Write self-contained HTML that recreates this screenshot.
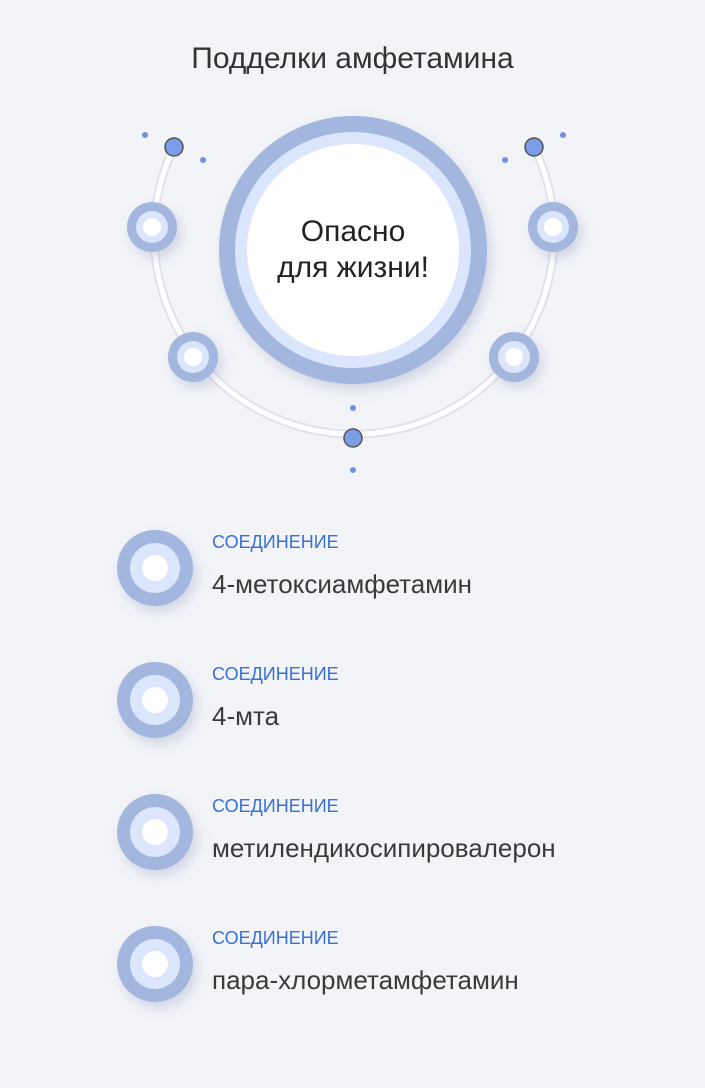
<!DOCTYPE html>
<html><head><meta charset="utf-8"><style>
body{margin:0;background:#f2f4f8;width:705px;height:1088px;overflow:hidden;font-family:"Liberation Sans","DejaVu Sans",sans-serif;position:relative}
.t{position:absolute;left:0;width:705px;text-align:center;top:42px;font-size:30px;color:#333}
.lab{position:absolute;left:212px;font-size:18px;color:#3a6fd8}
.nm{position:absolute;left:212px;font-size:26px;color:#3a3a3a}
</style></head><body>
<svg width="705" height="1088" style="position:absolute;left:0;top:0">
<defs><filter id="sh" x="-50%" y="-50%" width="200%" height="200%"><feDropShadow dx="4" dy="6" stdDeviation="6" flood-color="#8090b0" flood-opacity="0.3"/></filter></defs>
<path d="M174,147 A200,200 0 1,0 534,147" fill="none" stroke="#e0e3ea" stroke-width="9"/>
<path d="M174,147 A200,200 0 1,0 534,147" fill="none" stroke="#fff" stroke-width="5"/>
<g filter="url(#sh)"><circle cx="353" cy="250" r="134" fill="#a3b6de"/></g>
<circle cx="353" cy="250" r="118" fill="#dbe6fc"/>
<circle cx="353" cy="250" r="106" fill="#fff"/>
<g fill="#6f93e0"><circle cx="145" cy="135" r="3"/><circle cx="203" cy="160" r="3"/><circle cx="505" cy="160" r="3"/><circle cx="563" cy="135" r="3"/><circle cx="353" cy="408" r="3"/><circle cx="353" cy="470" r="3"/></g>
<g fill="#7b9de8" stroke="#555" stroke-width="1.5"><circle cx="174" cy="147" r="9"/><circle cx="534" cy="147" r="9"/><circle cx="353" cy="438" r="9"/></g>
<g>
<g filter="url(#sh)"><circle cx="152" cy="227" r="25" fill="#a3b6de"/><circle cx="193" cy="357" r="25" fill="#a3b6de"/><circle cx="514" cy="357" r="25" fill="#a3b6de"/><circle cx="553" cy="227" r="25" fill="#a3b6de"/></g>
<g fill="#dbe6fc"><circle cx="152" cy="227" r="16"/><circle cx="193" cy="357" r="16"/><circle cx="514" cy="357" r="16"/><circle cx="553" cy="227" r="16"/></g>
<g fill="#fff"><circle cx="152" cy="227" r="9"/><circle cx="193" cy="357" r="9"/><circle cx="514" cy="357" r="9"/><circle cx="553" cy="227" r="9"/></g>
</g>
<g filter="url(#sh)"><circle cx="155" cy="568" r="38" fill="#a3b6de"/><circle cx="155" cy="700" r="38" fill="#a3b6de"/><circle cx="155" cy="832" r="38" fill="#a3b6de"/><circle cx="155" cy="964" r="38" fill="#a3b6de"/></g>
<g fill="#dbe6fc"><circle cx="155" cy="568" r="25"/><circle cx="155" cy="700" r="25"/><circle cx="155" cy="832" r="25"/><circle cx="155" cy="964" r="25"/></g>
<g fill="#fff"><circle cx="155" cy="568" r="13"/><circle cx="155" cy="700" r="13"/><circle cx="155" cy="832" r="13"/><circle cx="155" cy="964" r="13"/></g>
</svg>
<div class="t">Подделки амфетамина</div>
<div style="position:absolute;left:233px;width:240px;top:214px;text-align:center;font-size:30px;line-height:36px;color:#222">Опасно<br>для жизни!</div>
<div class="lab" style="top:532px">СОЕДИНЕНИЕ</div><div class="nm" style="top:569px">4-метоксиамфетамин</div>
<div class="lab" style="top:664px">СОЕДИНЕНИЕ</div><div class="nm" style="top:701px">4-мта</div>
<div class="lab" style="top:796px">СОЕДИНЕНИЕ</div><div class="nm" style="top:833px">метилендикосипировалерон</div>
<div class="lab" style="top:928px">СОЕДИНЕНИЕ</div><div class="nm" style="top:965px">пара-хлорметамфетамин</div>
</body></html>
